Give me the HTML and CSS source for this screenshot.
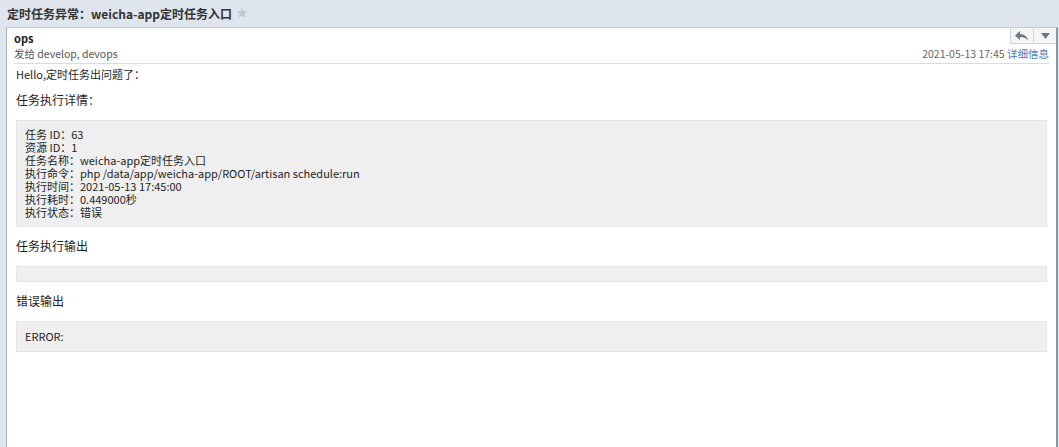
FILE: index.html
```html
<!DOCTYPE html>
<html lang="zh">
<head>
<meta charset="utf-8">
<title>定时任务异常</title>
<link rel="stylesheet" href="styles.css">
</head>
<body>
<div class="titlebar">
  <span class="subject">定时任务异常：weicha-app定时任务入口</span>
  <svg class="star" width="12" height="12" viewBox="0 0 24 24"><path d="M12 1.5l3.1 7 7.4.6-5.6 4.9 1.7 7.5L12 17.6 5.4 21.5l1.7-7.5L1.5 9.1l7.4-.6z" fill="#c4c8cc"/></svg>
</div>
<div class="panel">
  <div class="header">
    <div class="row">
      <span class="from">ops</span>
      <div class="actions">
        <span class="btn"><svg width="14" height="10" viewBox="0 0 14 10"><path d="M5 0L0 4.5 5 9V6c3.5 0 6 .8 8 3.5C12.3 5.5 9.5 3.3 5 3z" fill="#6f7880"/></svg></span>
        <span class="btn"><svg width="9" height="6" viewBox="0 0 9 6"><path d="M0 0h9L4.5 6z" fill="#6f7880"/></svg></span>
      </div>
    </div>
    <div class="row meta">
      <span class="to">发给 develop, devops</span>
      <span class="date">2021-05-13 17:45 <a class="detail">详细信息</a></span>
    </div>
  </div>
  <div class="content">
    <p class="hello">Hello,定时任务出问题了：</p>
    <h3 class="sec">任务执行详情：</h3>
    <div class="box">任务 ID：63<br>资源 ID：1<br>任务名称：weicha-app定时任务入口<br>执行命令：php /data/app/weicha-app/ROOT/artisan schedule:run<br>执行时间：2021-05-13 17:45:00<br>执行耗时：0.449000秒<br>执行状态：错误</div>
    <h3 class="sec">任务执行输出</h3>
    <div class="box empty"></div>
    <h3 class="sec">错误输出</h3>
    <div class="box last">ERROR:</div>
  </div>
</div>
</body>
</html>
```
FILE: styles.css
```css
html, body {
  margin: 0;
  padding: 0;
}
body {
  background: #dfe5ec;
  font-family: "Noto Sans CJK SC", "Noto Sans", sans-serif;
  font-size: 11px;
  color: #1e1e1e;
  height: 447px;
  overflow: hidden;
}
.titlebar {
  height: 27px;
  display: flex;
  align-items: center;
  padding-left: 7px;
  box-sizing: border-box;
}
.subject {
  font-weight: bold;
  font-size: 12px;
  color: #333;
}
.star {
  margin-left: 4px;
  margin-top: -2px;
}
.panel {
  margin-left: 6px;
  margin-right: 1px;
  background: #fff;
  border-left: 1px solid #a9b2bb;
  border-top: 1px solid #c3cad1;
  border-right: 2px solid #8f979e;
  height: 420px;
  box-sizing: border-box;
}
.header {
  margin: 0 7px;
  border-bottom: 1px solid #dcdcdc;
  padding-bottom: 2px;
  font-size: 10.5px;
}
.row {
  display: flex;
  justify-content: space-between;
}
.from {
  font-weight: bold;
  font-size: 11px;
  color: #222;
  line-height: 16px;
  padding-top: 2px;
}
.actions {
  display: flex;
  margin-right: -7px;
}
.btn {
  width: 22px;
  height: 15px;
  border-left: 1px solid #d0d5da;
  border-bottom: 1px solid #d0d5da;
  display: flex;
  align-items: center;
  justify-content: center;
  background: #f4f5f6;
}
.meta {
  line-height: 15px;
  color: #555;
}
.to {
  color: #555;
}
.date {
  color: #666;
}
.detail {
  color: #3f7bbf;
}
.content {
  padding: 0 9px;
}
.hello {
  margin: 3px 0 0 0;
  line-height: 14px;
}
.sec {
  font-size: 12px;
  font-weight: normal;
  line-height: 16px;
  margin: 11px 0 12px 0;
}
.box {
  background: #efefef;
  border: 1px solid #e6e6e6;
  padding: 7px 8px;
  line-height: 13px;
}
.box.empty {
  height: 0;
  padding: 7px 8px;
}
.box.last {
  padding: 8px 8px;
}
```
